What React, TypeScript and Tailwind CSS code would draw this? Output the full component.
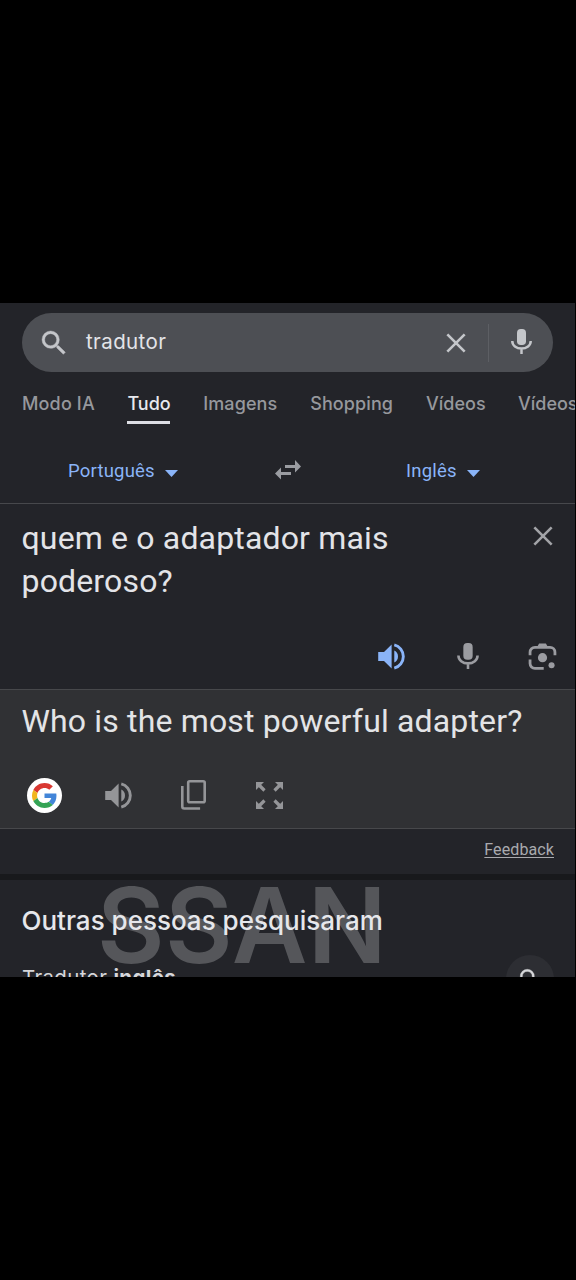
import type { ReactNode } from 'react'

interface Tab {
  label: string
  className: string
  active?: boolean
}

const tabs: Tab[] = [
  { label: 'Modo IA', className: 'w-[72.5px] tracking-[0.15px]' },
  { label: 'Tudo', className: 'w-[43px]', active: true },
  { label: 'Imagens', className: 'w-[74px] tracking-[0.1px]' },
  { label: 'Shopping', className: 'w-[83px] tracking-[0.1px]' },
  { label: 'Vídeos', className: 'w-[59px]' },
  { label: 'Vídeos', className: 'w-[59px]' },
]

function Icon({ className, children }: { className: string; children: ReactNode }) {
  return (
    <svg viewBox="0 0 24 24" fill="currentColor" className={`shrink-0 ${className}`}>
      {children}
    </svg>
  )
}

function SearchIcon({ className }: { className: string }) {
  return (
    <Icon className={className}>
      <path
        stroke="currentColor"
        strokeWidth="0.3"
        d="M15.5 14h-.79l-.28-.27A6.47 6.47 0 0 0 16 9.5 6.5 6.5 0 1 0 9.5 16c1.61 0 3.09-.59 4.23-1.57l.27.28v.79l5 4.99L20.49 19l-4.99-5zm-6 0a4.5 4.5 0 1 1 0-9 4.5 4.5 0 0 1 0 9z"
      />
    </Icon>
  )
}

function CloseIcon({ className }: { className: string }) {
  return (
    <Icon className={className}>
      <path d="M4 4 20 20M20 4 4 20" stroke="currentColor" strokeWidth="2.4" fill="none" />
    </Icon>
  )
}

function MicIcon({ className }: { className: string }) {
  return (
    <Icon className={className}>
      <rect x="8" y="0.8" width="8" height="14.4" rx="3.4" />
      <path
        d="M3.8 11.5c0 4 3.6 6.8 8.2 6.8s8.2-2.8 8.2-6.8M12 18v5.2"
        stroke="currentColor"
        strokeWidth="2.2"
        fill="none"
      />
    </Icon>
  )
}

function SpeakerIcon({ className }: { className: string }) {
  return (
    <Icon className={className}>
      <path d="M1 8.3v7.4h4.8L12.1 22V2L5.8 8.3zM14.3 7v10a5.6 5.6 0 0 0 0-10z" />
      <path d="M14.3 2.4a9.9 9.9 0 0 1 0 19.2" stroke="currentColor" strokeWidth="2.4" fill="none" />
    </Icon>
  )
}

function LensIcon({ className }: { className: string }) {
  return (
    <Icon className={className}>
      <path
        d="M1.7 11V8.5a4 4 0 0 1 4-4h12.6a4 4 0 0 1 4 4V11M1.7 14.5v3.3a4 4 0 0 0 4 4H13"
        stroke="currentColor"
        strokeWidth="2.3"
        fill="none"
      />
      <path d="M7.3 4.5 9.2 1.3h5.6l1.9 3.2z" />
      <circle cx="12" cy="13" r="3.8" />
      <circle cx="19.5" cy="19.3" r="2.5" />
    </Icon>
  )
}

function LanguageButton({ label, className }: { label: string; className: string }) {
  return (
    <button type="button" className={`flex items-center text-[#8ab4f8] ${className}`}>
      <span className="text-[18.5px] tracking-[0.2px]">{label}</span>
      <svg viewBox="0 0 13 7" fill="currentColor" className="mt-1 w-[13px] h-[7px]">
        <path d="M0 0h13L6.5 7z" />
      </svg>
    </button>
  )
}

export default function App() {
  return (
    <div className="w-[576px] h-[1280px] bg-black pt-[303px] font-['Roboto',sans-serif]">
      <div className="relative isolate w-[575px] h-[674px] overflow-hidden bg-[#232429] flex flex-col">
        <header className="h-[150px] shrink-0 pt-[10px] font-['Inter',sans-serif]">
          <div className="ml-[22px] w-[531px] h-[59px] rounded-full bg-[#4d4f54] flex items-center text-[#c4c6ca]">
            <SearchIcon className="ml-[16px] w-[32px] h-[32px]" />
            <span className="ml-[16px] flex-1 text-[20.5px] tracking-[0.4px] text-[#e3e4e8]">tradutor</span>
            <CloseIcon className="w-[26px] h-[26px]" />
            <div className="ml-[19px] w-px h-[38px] bg-[#5d5f64]" />
            <MicIcon className="ml-[19px] mr-[18px] mb-[2px] w-[27px] h-[27px]" />
          </div>
          <nav className="ml-[22px] mt-[15px] flex gap-[32.9px] text-[18px] leading-[34px] font-medium text-[#96989d]">
            {tabs.map((tab, index) => (
              <div key={index} className={`shrink-0 whitespace-nowrap ${tab.className}`}>
                <span className={tab.active ? 'text-[#e8e9ee]' : ''}>{tab.label}</span>
                {tab.active && <div className="h-[3px] bg-[#dcdde3]" />}
              </div>
            ))}
          </nav>
        </header>

        <div className="h-[50px] shrink-0 flex items-start">
          <LanguageButton label="Português" className="mt-[5px] ml-[68px] w-[110px] justify-between" />
          <svg viewBox="0 0 26 20" fill="currentColor" className="ml-[97px] mt-[7px] w-[26px] h-[20px] text-[#9a9ca1]">
            <path d="M10 5h10V0l6 6.5-6 6V8H10zM16 12H6V7.5L0 13.5l6 6V15h10z" />
          </svg>
          <LanguageButton label="Inglês" className="mt-[5px] ml-[105px] w-[74px] justify-between" />
        </div>

        <section className="h-[186px] shrink-0 border-t border-[#47484c] flex flex-col justify-between">
          <div className="flex justify-between pl-[22px] pr-[19.5px] pt-[13px]">
            <p className="-ml-[0.5px] w-[400px] text-[32px] tracking-[0.16px] leading-[43px] text-[#e3e4e8]">
              quem e o adaptador mais poderoso?
            </p>
            <CloseIcon className="mt-[6px] w-[26px] h-[26px] text-[#a2a3a7]" />
          </div>
          <div className="flex justify-end gap-[46.5px] pr-[18px] pb-[18px] text-[#9b9ca1]">
            <SpeakerIcon className="w-[29px] h-[29px] text-[#8ab4f8]" />
            <MicIcon className="ml-px w-[28px] h-[28px]" />
            <LensIcon className="w-[29px] h-[29px]" />
          </div>
        </section>

        <section className="h-[140px] shrink-0 border-y border-[#47484b] bg-[#303134]">
          <p className="ml-[21.5px] mt-[10px] whitespace-nowrap text-[32px] tracking-[0.16px] leading-[43px] text-[#e3e4e6]">
            Who is the most powerful adapter?
          </p>
          <div className="mt-[35px] ml-[26.5px] flex items-center text-[#949598]">
            <div className="w-[35px] h-[35px] rounded-full bg-white flex items-center justify-center">
              <svg viewBox="0 0 48 48" className="w-[25px] h-[25px]">
                <path fill="#d93832" d="M24 9.5c3.54 0 6.71 1.22 9.21 3.6l6.85-6.85C35.9 2.38 30.47 0 24 0 14.62 0 6.51 5.38 2.56 13.22l7.98 6.19C12.43 13.72 17.74 9.5 24 9.5z" />
                <path fill="#4285d8" d="M46.98 24.55c0-1.57-.15-3.09-.38-4.55H24v9.02h12.94c-.58 2.96-2.26 5.48-4.78 7.18l7.73 6c4.51-4.18 7.09-10.36 7.09-17.65z" />
                <path fill="#f2b51d" d="M10.53 28.59c-.48-1.45-.76-2.99-.76-4.59s.27-3.14.76-4.59l-7.98-6.19C.92 16.46 0 20.12 0 24c0 3.88.92 7.54 2.56 10.78l7.97-6.19z" />
                <path fill="#34a355" d="M24 48c6.48 0 11.93-2.13 15.89-5.81l-7.73-6c-2.15 1.45-4.92 2.3-8.16 2.3-6.26 0-11.57-4.22-13.47-9.91l-7.98 6.19C6.51 42.62 14.62 48 24 48z" />
              </svg>
            </div>
            <SpeakerIcon className="ml-[42px] mb-px w-[29px] h-[29px]" />
            <svg viewBox="0 0 25 30" fill="none" stroke="currentColor" strokeWidth="2.6" className="ml-[48.5px] mb-[2px] w-[25px] h-[30px]">
              <rect x="7.2" y="1.3" width="16.5" height="21" rx="1.5" />
              <path d="M1.3 6v20.5a2 2 0 0 0 2 2h15.8" />
            </svg>
            <svg viewBox="0 0 27 27" fill="none" stroke="currentColor" strokeWidth="3.2" className="ml-[50px] mb-px w-[27px] h-[27px]">
              <path d="M3 3l5.5 5.5M24 3l-5.5 5.5M3 24l5.5-5.5M24 24l-5.5-5.5" />
              <path fill="currentColor" stroke="none" d="M0 0h8L0 8zM27 0v8l-8-8zM0 27v-8l8 8zM27 27h-8l8-8z" />
            </svg>
          </div>
        </section>

        <div className="h-[45px] shrink-0 flex justify-end pr-[21px] pt-[9px] text-[16px] tracking-[0.1px] leading-[24px] text-[#a9aaae]">
          <a className="underline underline-offset-[2px]">Feedback</a>
        </div>
        <div className="h-[6px] shrink-0 bg-[#18191c]" />

        <section className="relative flex-1 font-['Inter',sans-serif]">
          <div className="absolute -z-10 left-[97px] top-[-7px] font-semibold text-[104px] leading-[104px] tracking-[0.3px] text-[#55565a]">
            SSAN
          </div>
          <h2 className="pl-[21.5px] pt-[23px] whitespace-nowrap text-[26px] leading-[36px] font-medium text-[#e6e7eb]">
            Outras pessoas pesquisaram
          </h2>
          <div className="pl-[22px] pr-[21px] mt-[16px] flex justify-between text-[#d6d7da]">
            <p className="mt-[9px] text-[20.5px] tracking-[0.35px] leading-[28px] whitespace-nowrap">
              Tradutor <b>inglês</b>
            </p>
            <div className="w-[48px] h-[48px] rounded-full bg-[#2d2e33] flex items-center justify-center">
              <SearchIcon className="w-[26px] h-[26px]" />
            </div>
          </div>
        </section>
      </div>
    </div>
  )
}
